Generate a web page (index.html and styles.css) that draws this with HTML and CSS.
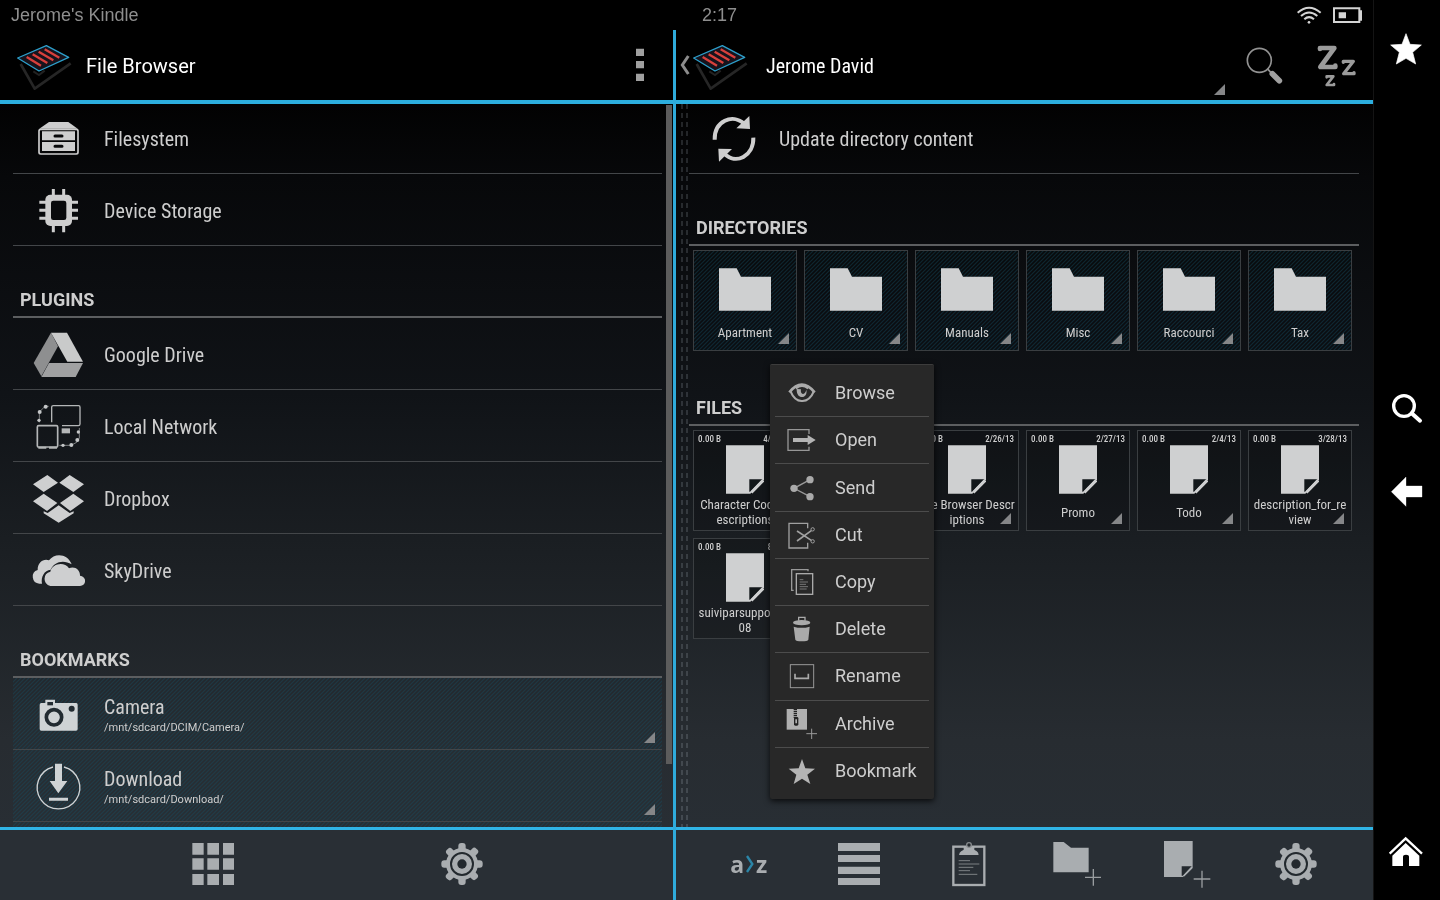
FILE: index.html
```html
<!DOCTYPE html>
<html lang="en">
<head>
<meta charset="utf-8">
<title>File Browser</title>
<link rel="stylesheet" href="styles.css">
</head>
<body>
<svg class="defs" aria-hidden="true">
  <symbol id="logo" viewBox="48 120 168 150">
    <path d="M62 192 104 266 212 190" fill="none" stroke="#262626" stroke-width="8" stroke-linejoin="round"/>
    <path d="M100 214 117 225 134 212" fill="none" stroke="#222" stroke-width="6"/>
    <path d="M53 174 139 137 206 172 117 213Z" fill="#17131c" stroke="#2d9fcb" stroke-width="4" stroke-linejoin="round"/>
    <path d="M80 171 123 197M98 163 142 189M116 155 160 181M134 148 178 173" stroke="#d8403c" stroke-width="7"/>
  </symbol>
  <symbol id="gear" viewBox="698 60 144 144">
    <g fill="#a9adb0">
      <circle cx="770" cy="132" r="48"/>
      <g id="teeth"><rect x="759" y="69" width="22" height="126" rx="9"/><rect x="708" y="121" width="124" height="22" rx="9"/></g>
      <use href="#teeth" transform="rotate(45 770 132)"/>
    </g>
    <circle cx="770" cy="132" r="33" fill="none" stroke="#23292e" stroke-width="6"/>
    <circle cx="770" cy="132" r="14" fill="#23292e"/>
  </symbol>
  <symbol id="folder" viewBox="117 203 156 127"><path d="M117 203H170L183 228H273V330H117Z" fill="#cfd0d1"/></symbol>
  <symbol id="file" viewBox="209 194 114 146"><path d="M209 194H323V296L282 340H209Z" fill="#cfd0d1"/><path d="M279 296H319L282 334H279Z" fill="#12171a"/><path d="M285 336 321 299" stroke="#cfd0d1" stroke-width="9"/></symbol>
</svg>

<main class="screen">
  <header class="status">
    <span>Jerome's Kindle</span>
    <span class="clock">2:17</span>
    <span class="indicators">
      <svg width="26" height="20" viewBox="589 12 78 60" fill="none" stroke="#d4d4d4" stroke-width="6"><path d="M594 35Q628 5 663 35M604 45Q628 24 653 45M614 55Q628 42 643 55"/><circle cx="628" cy="64" r="4" fill="#d4d4d4" stroke="none"/></svg>
      <svg width="29" height="16" viewBox="699 18 87 48"><path d="M702 22H778V63H702Z" fill="none" stroke="#d4d4d4" stroke-width="6"/><path d="M779 28H786V59H779ZM716 34H738V52H716Z" fill="#d4d4d4"/></svg>
    </span>
  </header>

  <div class="panes">
    <section class="pane pane-left">
      <header class="bar">
        <svg class="logo"><use href="#logo"/></svg>
        <h1>File Browser</h1>
        <button class="overflow" aria-label="More options"><svg width="8" height="34" viewBox="108 148 24 102"><path d="M108 150h24v22h-24zM108 187h24v22h-24zM108 225h24v22h-24z" fill="#a0a0a0"/></svg></button>
      </header>
      <div class="content">
        <div class="list">
          <button class="row"><svg class="row-icon" viewBox="93 331 162 162"><path d="M118 384 147 364H205L233 384Z" fill="#cecece"/><rect x="117" y="386" width="117" height="74" rx="5" fill="none" stroke="#cecece" stroke-width="5"/><path d="M126 392H225V419H126ZM126 424H225V451H126Z" fill="#cecece"/><path d="M165 406H186M165 437H186" stroke="#08090a" stroke-width="9" stroke-linecap="round"/></svg><span>Filesystem</span></button>
          <button class="row"><svg class="row-icon" viewBox="93 547 162 162"><path d="M160 565V695M191 565V695M118 605H234M118 629H234M118 653H234" stroke="#cecece" stroke-width="9"/><rect x="136" y="582" width="80" height="94" rx="15" fill="#cecece"/><rect x="153" y="600" width="46" height="58" rx="7" fill="#0a0b0d"/></svg><span>Device Storage</span></button>
          <h2>PLUGINS</h2>
          <button class="row"><svg class="row-icon" viewBox="93 139 162 162"><path d="M153 156 174 197 124 287 101 247Z" fill="#8e8f90"/><path d="M153 156H201L249 243H202Z" fill="#c9caca"/><path d="M147 247H249L227 289H124Z" fill="#a0a1a2"/></svg><span>Google Drive</span></button>
          <button class="row"><svg class="row-icon" viewBox="93 355 162 162" fill="none" stroke="#b4b6b7" stroke-width="4"><path d="M155 425V379Q155 375 160 375H236Q240 375 240 380V430Q240 435 235 435H186"/><rect x="112" y="435" width="61" height="64" rx="4" stroke-width="5"/><path d="M115 501H139M147 501H171" stroke-width="6"/><path d="M146 377H135L118 394V425M238 442V472L230 485 213 494H178" stroke-width="2"/><path d="M185 443H210V458H185Z" fill="#b4b6b7" stroke="none"/><g fill="#c4c6c7" stroke="none"><circle cx="137" cy="378" r="6"/><circle cx="119" cy="394" r="6"/><circle cx="117" cy="419" r="5"/><circle cx="235" cy="454" r="5"/><circle cx="232" cy="478" r="6"/><circle cx="214" cy="493" r="6"/><circle cx="189" cy="494" r="5"/></g></svg><span>Local Network</span></button>
          <button class="row"><svg class="row-icon" viewBox="93 571 162 162" fill="#cecfd0"><path d="M142 583 174 606 131 634 99 611ZM209 583 252 611 220 634 178 606ZM131 639 172 667 141 691 99 662ZM220 639 252 662 211 691 180 667ZM176 674 209 697 221 692V698L176 726 131 698V692L143 697Z"/></svg><span>Dropbox</span></button>
          <button class="row"><svg class="row-icon" viewBox="93 787 162 162" fill="#cecfd0"><path d="M126 909H118A21 21 0 0 1 113 868C112 845 132 832 147 839C164 815 204 819 215 851C190 835 161 844 152 867C133 868 122 889 126 909Z"/><path d="M151 916A22 22 0 0 1 151 873C157 848 193 842 207 863C225 855 241 869 240 885C261 888 260 915 240 916Z"/></svg><span>SkyDrive</span></button>
          <h2>BOOKMARKS</h2>
          <button class="row two-line hatch corner"><svg class="row-icon" viewBox="93 139 162 162"><path d="M136 187V177H165V187H229Q233 187 233 192V265Q233 270 228 270H124Q119 270 119 265V192Q119 187 124 187Z" fill="#cfd3d5"/><path d="M142 184H159V194H142Z" fill="#222b31"/><circle cx="162" cy="230" r="23" fill="none" stroke="#222b31" stroke-width="11"/><circle cx="215" cy="204" r="9" fill="#222b31"/></svg><span>Camera<small>/mnt/sdcard/DCIM/Camera/</small></span></button>
          <button class="row two-line hatch corner"><svg class="row-icon" viewBox="93 355 162 162"><path d="M159 379A64 64 0 1 0 192 379" fill="none" stroke="#cfd3d5" stroke-width="4"/><path d="M165 369H186V421H202L175 458 149 421H165ZM147 471H204V480H147Z" fill="#cfd3d5"/></svg><span>Download<small>/mnt/sdcard/Download/</small></span></button>
          <div class="row hatch"></div>
        </div>
        <div class="scrollbar"></div>
      </div>
      <footer class="tools">
        <button aria-label="Grid"><svg viewBox="567 600 144 144" fill="#a9adb0"><path d="M577 609h34v35h-34zM622 609h35v35h-35zM669 609h33v35h-33zM577 655h34v34h-34zM622 655h35v34h-35zM669 655h33v34h-33zM577 702h34v33h-34zM622 702h35v33h-35zM669 702h33v33h-33z"/></svg></button>
        <button aria-label="Settings"><svg><use href="#gear"/></svg></button>
      </footer>
    </section>

    <section class="pane pane-right">
      <header class="bar bar-right">
        <button class="up" aria-label="Up"><svg width="16" height="20" viewBox="231 168 48 60"><path d="M268 171 250 198 268 225" fill="none" stroke="#8c8c8c" stroke-width="9"/></svg><svg class="logo"><use href="#logo"/></svg></button>
        <button class="title corner">Jerome David</button>
        <button class="action" aria-label="Search"><svg viewBox="424 124 144 144"><circle cx="479" cy="182" r="36" fill="none" stroke="#929292" stroke-width="5"/><path d="M503 207 514 219" stroke="#929292" stroke-width="5"/><path d="M518 222 539 243" stroke="#a0a0a0" stroke-width="17" stroke-linecap="round"/></svg></button>
        <button class="action" aria-label="Sleep"><svg viewBox="640 124 144 144" fill="none" stroke="#9b9b9b" stroke-linejoin="round" stroke-linecap="round"><path d="M661 148V145H704L662 202H707V198" stroke-width="14"/><path d="M731 188V185H761L732 222H763V219" stroke-width="10"/><path d="M681 233V230H701L681 256H703V253" stroke-width="8"/></svg></button>
      </header>
      <div class="content">
        <div class="grip"></div>
        <div class="list list-right">
          <button class="row"><svg class="row-icon" viewBox="322 331 162 162"><path d="M345 417C344 362 398 337 434 370M461 411C463 466 408 494 374 459" fill="none" stroke="#cecece" stroke-width="12"/><path d="M449 346 451 385 410 383ZM356 444 397 445 358 483Z" fill="#cecece"/></svg><span>Update directory content</span></button>
          <h2>DIRECTORIES</h2>
          <div class="tiles">
            <button class="tile hatch corner"><svg class="folder"><use href="#folder"/></svg><span class="name">Apartment</span></button>
            <button class="tile hatch corner"><svg class="folder"><use href="#folder"/></svg><span class="name">CV</span></button>
            <button class="tile hatch corner"><svg class="folder"><use href="#folder"/></svg><span class="name">Manuals</span></button>
            <button class="tile hatch corner"><svg class="folder"><use href="#folder"/></svg><span class="name">Misc</span></button>
            <button class="tile hatch corner"><svg class="folder"><use href="#folder"/></svg><span class="name">Raccourci</span></button>
            <button class="tile hatch corner"><svg class="folder"><use href="#folder"/></svg><span class="name">Tax</span></button>
          </div>
          <h2>FILES</h2>
          <div class="tiles">
            <button class="tile corner"><span class="meta"><span>0.00 B</span><span>4/11/13</span></span><svg class="file"><use href="#file"/></svg><span class="name">Character Code D<br>escriptions</span></button>
            <button class="tile corner" aria-label="File"></button>
            <button class="tile corner"><span class="meta"><span>0.00 B</span><span>2/26/13</span></span><svg class="file"><use href="#file"/></svg><span class="name">File Browser Descr<br>iptions</span></button>
            <button class="tile corner"><span class="meta"><span>0.00 B</span><span>2/27/13</span></span><svg class="file"><use href="#file"/></svg><span class="name">Promo</span></button>
            <button class="tile corner"><span class="meta"><span>0.00 B</span><span>2/4/13</span></span><svg class="file"><use href="#file"/></svg><span class="name">Todo</span></button>
            <button class="tile corner"><span class="meta"><span>0.00 B</span><span>3/28/13</span></span><svg class="file"><use href="#file"/></svg><span class="name">description_for_re<br>view</span></button>
            <button class="tile corner"><span class="meta"><span>0.00 B</span><span>8/9/12</span></span><svg class="file"><use href="#file"/></svg><span class="name">suiviparsupport20<br>08</span></button>
          </div>
        </div>
      </div>
      <footer class="tools tools-right">
        <button class="sort" aria-label="Sort a to z"><span>a</span><svg class="sort-arrow" viewBox="196 106 24 54"><path d="M199 109 215 133 199 157" fill="none" stroke="#2b86a8" stroke-width="7"/></svg><span>z</span></button>
        <button aria-label="List"><svg viewBox="462 60 144 144" fill="#a9adb0"><path d="M474 69h126v24H474zM474 105h126v21H474zM474 140h126v22H474zM474 174h126v21H474z"/></svg></button>
        <button aria-label="Clipboard"><svg viewBox="791 60 144 144"><rect x="819" y="80" width="93" height="115" fill="none" stroke="#a9adb0" stroke-width="7"/><path d="M836 105Q838 91 858 88H874Q894 91 895 105Z" fill="#a9adb0"/><path d="M850 80H882V92H850Z" fill="#a9adb0"/><circle cx="866" cy="75" r="7" fill="#23292e" stroke="#888c8f" stroke-width="4"/><path d="M835 122H869M835 132H897M835 142H879M835 152H869M835 163H891" stroke="#7c8184" stroke-width="3"/></svg></button>
        <button aria-label="New folder"><svg viewBox="40 60 144 144"><path d="M41 66H72L94 83H147V157H41Z" fill="#a9adb0"/><path d="M161 147V197M136 172H186" stroke="#999da0" stroke-width="4"/></svg></button>
        <button aria-label="New file"><svg viewBox="370 60 144 144"><path d="M373 63H459V142L430 171H373Z" fill="#a9adb0"/><path d="M426 139H456L430 167H426Z" fill="#23292e"/><path d="M432 168 457 143" stroke="#a9adb0" stroke-width="5"/><path d="M487 152V203M462 177H512" stroke="#999da0" stroke-width="4"/></svg></button>
        <button aria-label="Settings"><svg><use href="#gear"/></svg></button>
      </footer>

      <div class="menu" role="menu">
        <button role="menuitem"><svg viewBox="63 50 96 96"><path d="M73 96Q110 50 149 96" fill="none" stroke="#aaa" stroke-width="8"/><path d="M76 92Q89 123 111 122 134 123 147 92" fill="none" stroke="#aaa" stroke-width="6"/><path d="M95 86C94 121 130 115 124 88 119 108 104 102 108 87Z" fill="#aaa"/><path d="M92 84Q111 68 130 84" fill="none" stroke="#aaa" stroke-width="8"/></svg>Browse</button>
        <button role="menuitem"><svg viewBox="63 192 96 96"><path d="M132 222V209H69V271H132V260" fill="none" stroke="#969696" stroke-width="4"/><path d="M84 234H128V225L152 240 128 255V246H84Z" fill="#b4b4b4"/></svg>Open</button>
        <button role="menuitem"><svg viewBox="63 333 96 96" fill="#aaa"><path d="M135 356 87 382 135 407" fill="none" stroke="#999" stroke-width="4"/><circle cx="135" cy="356" r="11"/><circle cx="87" cy="382" r="11"/><circle cx="135" cy="407" r="11"/></svg>Send</button>
        <button role="menuitem"><svg viewBox="63 475 96 96" fill="none" stroke="#a0a0a0" stroke-width="4"><path d="M128 503V488H72V562H128V546"/><path d="M96 511 139 539M96 541 139 510" stroke-width="5"/><circle cx="143" cy="506" r="5" stroke-width="3"/><circle cx="143" cy="542" r="5" stroke-width="3"/></svg>Cut</button>
        <button role="menuitem"><svg viewBox="318 438 96 96" fill="none" stroke="#999" stroke-width="4"><path d="M384 454V449H335V511H341"/><rect x="349" y="461" width="49" height="62" stroke="#aaa"/><path d="M359 479H370M359 486H384M359 493H378M359 500H384M359 507H380" stroke="#777" stroke-width="3"/></svg>Copy</button>
        <button role="menuitem"><svg viewBox="63 129 96 96" fill="#aaa"><path d="M101 152V142H120V152" fill="none" stroke="#aaa" stroke-width="4"/><ellipse cx="110" cy="158" rx="26" ry="8"/><path d="M86 170Q110 177 134 170L130 209Q128 214 110 214 93 214 91 209Z"/></svg>Delete</button>
        <button role="menuitem"><svg viewBox="63 270 96 96" fill="none" stroke="#999" stroke-width="3"><rect x="76" y="284" width="70" height="69"/><path d="M90 311V325H130V311" stroke="#aaa" stroke-width="5"/></svg>Rename</button>
        <button role="menuitem"><svg viewBox="63 412 96 96"><path d="M65 415H126V477H65Z" fill="#b0b0b0"/><path d="M91 415V442" stroke="#222" stroke-width="10" stroke-dasharray="4 2"/><rect x="87" y="439" width="13" height="26" rx="4" fill="#222"/><path d="M91 446h5v12h-5z" fill="#b0b0b0"/><path d="M140 474V505M124 489H156" stroke="#999" stroke-width="3"/></svg>Archive</button>
        <button role="menuitem"><svg viewBox="63 553 96 96"><path d="M111 565 121 593 150 594 127 612 136 640 111 624 86 640 94 612 71 594 101 593Z" fill="#b4b4b4"/></svg>Bookmark</button>
      </div>
    </section>
  </div>
</main>

<nav class="rail">
  <button aria-label="Favourites"><svg viewBox="857 90 120 120"><path d="M917 101 929 133 963 135 937 157 946 192 917 175 888 192 897 157 871 135 905 133Z" fill="#fff" stroke="#fff" stroke-width="2" stroke-linejoin="round"/></svg></button>
  <div class="rail-middle">
    <button aria-label="Search"><svg viewBox="857 27 120 120" fill="none" stroke="#fff"><circle cx="911" cy="78" r="31" stroke-width="10"/><path d="M934 100 959 122" stroke-width="12" stroke-linecap="round"/></svg></button>
    <button aria-label="Back"><svg viewBox="857 279 120 120"><path d="M873 335 917 291V318H965V351H917V379Z" fill="#fff" stroke="#fff" stroke-width="1" stroke-linejoin="round"/></svg></button>
  </div>
  <button aria-label="Home"><svg viewBox="1037 36 120 120"><path d="M1048 101 1096 55 1145 101" fill="none" stroke="#fff" stroke-width="7"/><path d="M1096 69 1137 107V138H1106V110Q1106 104 1097 104 1088 104 1088 110V138H1056V107Z" fill="#fff"/></svg></button>
</nav>
</body>
</html>
```

FILE: styles.css
```css
* { box-sizing: border-box; }

body {
  margin: 0;
  height: 100vh;
  display: flex;
  background: #000;
  color: #cecece;
  font-family: "Roboto Condensed", Roboto, sans-serif;
  overflow: hidden;
}

button {
  margin: 0;
  padding: 0;
  border: 0;
  background: none;
  color: inherit;
  font: inherit;
  text-align: left;
}

svg { display: block; flex: none; }
.defs { position: absolute; width: 0; height: 0; }

.screen {
  flex: 1;
  min-width: 0;
  display: flex;
  flex-direction: column;
}

/* Status bar */
.status {
  height: 30px;
  padding: 0 11px;
  display: grid;
  grid-template-columns: 1fr auto 1fr;
  align-items: center;
  color: #8e8e8e;
  font: 18px/30px "Liberation Sans", sans-serif;
}
.clock { padding-left: 66px; }
.indicators {
  display: flex;
  justify-content: flex-end;
  align-items: center;
  gap: 11px;
}

/* Panes */
.panes {
  flex: 1;
  min-height: 0;
  display: flex;
}
.pane {
  display: flex;
  flex-direction: column;
  min-width: 0;
}
.pane-left {
  flex: 673 0 0;
  border-right: 3px solid #2fabdb;
}
.pane-right {
  flex: 697 0 0;
  position: relative;
}

.bar {
  height: 74px;
  flex: none;
  display: flex;
  align-items: center;
  padding-left: 16px;
  border-bottom: 4px solid #2caede;
  color: #fff;
  font-size: 20px;
}
.bar-right { padding-left: 0; }
.logo { width: 56px; height: 50px; }
h1 {
  flex: 1;
  margin: 0;
  padding: 2px 0 0 14px;
  font: 400 20px/28px Roboto, sans-serif;
}
.overflow { padding: 16px 29px; }
.up { display: flex; align-items: center; }
.title {
  flex: 1;
  align-self: stretch;
  position: relative;
  padding: 2px 0 0 18px;
  font-size: 20px;
}
.action {
  width: 72px;
  display: flex;
  justify-content: center;
}
.action svg, .tools svg { width: 48px; height: 48px; }

.content {
  flex: 1;
  min-height: 0;
  display: flex;
  overflow: hidden;
  background: linear-gradient(#020202, #07080a 10%, #101317 40%, #1b1f23 62%, #272c31 88%, #282e34);
}
.list {
  flex: 1;
  min-width: 0;
  margin-left: 13px;
}
.list-right { margin: 0 14px 0 0; }
.scrollbar {
  width: 6px;
  height: 659px;
  margin: 1px 1px 0 4px;
  background: #5c5c5c;
}
.grip {
  width: 13px;
  background:
    linear-gradient(90deg, #000 0 5px, transparent 5px 7px, #000 7px 10px, transparent 10px 12px, #000 12px),
    repeating-linear-gradient(#202224 0 5px, #000 5px 9px);
  mix-blend-mode: screen;
}

/* List rows */
.row {
  position: relative;
  width: 100%;
  height: 72px;
  padding-left: 18px;
  display: flex;
  align-items: center;
  gap: 19px;
  border-bottom: 1px solid #434649;
  font-size: 20px;
  line-height: 24px;
}
.row span { padding-top: 2px; }
.row:first-child { height: 70px; padding-bottom: 2px; }
.list-right .row { gap: 18px; }
.row-icon { width: 54px; height: 54px; }
.row small {
  display: block;
  font: 11px/18px Roboto, sans-serif;
}
.two-line span { padding-top: 5px; }
h2 {
  height: 72px;
  margin: 0;
  padding: 0 7px 5px;
  display: flex;
  align-items: flex-end;
  border-bottom: 2px solid #5c5e60;
  font: 700 18px/22px Roboto, sans-serif;
}

/* Diagonal stripes, one every 4px */
.hatch {
  background-image: linear-gradient(135deg, #14506660 0, #14506600 20% 30%, #14506660 50%, #14506600 70% 80%, #14506660 100%);
  background-size: 4px 4px;
}
.corner::after {
  content: "";
  position: absolute;
  right: 7px;
  bottom: 6px;
  width: 11px;
  height: 11px;
  background: #858688;
  clip-path: polygon(100% 0, 100% 100%, 0 100%);
}
.title.corner::after { right: 4px; bottom: 5px; }

/* Tiles */
.tiles {
  display: grid;
  grid-template-columns: repeat(6, 1fr);
  gap: 7px;
  padding: 4px 7px 3px 4px;
}
.tile {
  position: relative;
  height: 101px;
  min-width: 0;
  display: flex;
  flex-direction: column;
  align-items: center;
  border: 1px solid #3a3e41;
  background-color: rgba(0, 0, 0, 0.15);
}
.folder { width: 52px; height: 43px; margin-top: 17px; }
.file { width: 38px; height: 49px; }
.name {
  margin-top: auto;
  height: 36px;
  display: grid;
  align-content: center;
  font-size: 13px;
  line-height: 15px;
  text-align: center;
  white-space: nowrap;
}
.meta {
  width: 100%;
  height: 14px;
  padding: 3px 4px 0;
  display: flex;
  justify-content: space-between;
  font-size: 9px;
  font-weight: 500;
  line-height: 11px;
}

/* Bottom toolbars */
.tools {
  height: 73px;
  flex: none;
  display: flex;
  padding: 0 87px 2px 89px;
  border-top: 3px solid #30b4e6;
  background: #292f35;
}
.tools-right { padding: 0 22px 2px 18px; }
.tools button {
  flex: 1;
  display: flex;
  align-items: center;
  justify-content: center;
}
.tools .sort {
  gap: 2px;
  color: #a9adb0;
  font: 700 23px/30px "Open Sans", sans-serif;
}
.tools .sort-arrow { width: 8px; height: 18px; }

/* Context menu */
.menu {
  position: absolute;
  left: 94px;
  top: 334px;
  width: 164px;
  min-height: 435px;
  padding: 5px;
  display: flex;
  flex-direction: column;
  background: #282828;
  border-top: 1px solid #3c3c3c;
  border-radius: 2px;
  box-shadow: 0 2px 6px rgba(0, 0, 0, 0.8);
}
.menu button {
  flex: 1;
  display: flex;
  align-items: center;
  gap: 17px;
  padding-left: 11px;
  border-bottom: 1px solid #4c4c4c;
  font: 18px/24px Roboto, sans-serif;
}
.menu button:last-child { border-bottom: 0; }
.menu svg { width: 32px; height: 32px; }

/* Device navigation rail */
.rail {
  width: 67px;
  flex: none;
  padding: 30px 3px 28px 0;
  border-left: 1px solid #141414;
  display: flex;
  flex-direction: column;
  align-items: center;
  justify-content: space-between;
}
.rail-middle { display: grid; gap: 44px; }
.rail svg { width: 40px; height: 40px; }
```
